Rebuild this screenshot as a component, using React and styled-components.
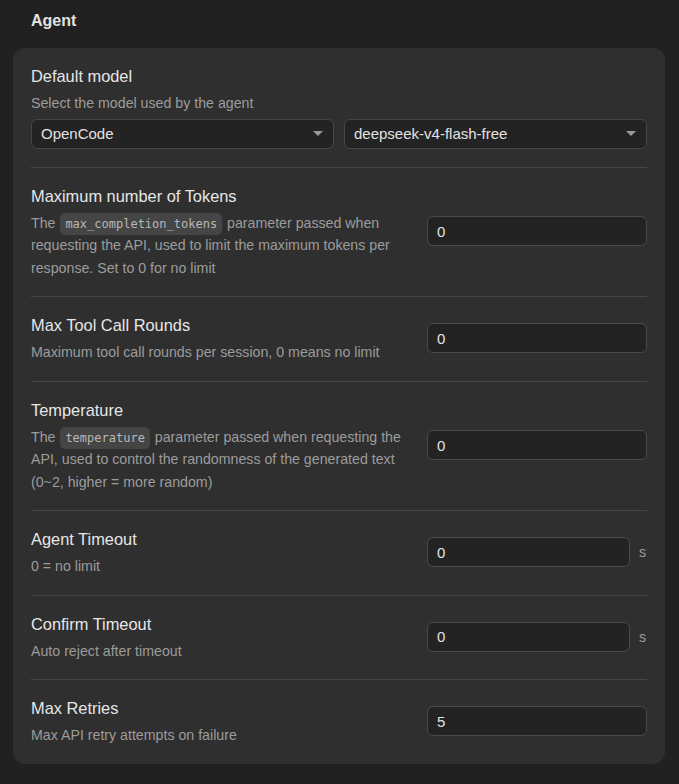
import React from "react";
import styled, { createGlobalStyle } from "styled-components";

const Global = createGlobalStyle`
  html, body { margin: 0; padding: 0; background: #212121; }
  body { font-family: "Liberation Sans", Arial, sans-serif; color: #e4e4e4; }
  * { box-sizing: border-box; }
`;

const Page = styled.div`
  padding: 9px 14px 20px 13px;
  min-height: 784px;
`;

const Heading = styled.h2`
  margin: 0 0 15px 18px;
  font-size: 16px;
  line-height: 24px;
  font-weight: 700;
  color: #e2e2e2;
`;

const Card = styled.section`
  background: #2f2f2f;
  border-radius: 12px;
  padding: 0 18px;
`;

const Row = styled.div`
  display: ${(p) => (p.$stacked ? "block" : "flex")};
  align-items: center;
  gap: 20px;
  padding: 16px 0 17px;
  border-bottom: 1px solid #474747;
  &:first-child { padding-bottom: 18px; }
  &:last-child { border-bottom: none; }
`;

const Label = styled.div`
  flex: 1;
  min-width: 0;
`;

const Title = styled.div`
  font-size: 16.4px;
  line-height: 24px;
  height: 24px;
  color: #e6e6e6;
`;

const Desc = styled.div`
  margin-top: 4px;
  font-size: 14.2px;
  line-height: 22.5px;
  color: #9c9c9c;
`;

const Code = styled.code`
  font-family: "DejaVu Sans Mono", "Liberation Mono", monospace;
  font-size: 12px;
  line-height: 1;
  padding: 4px 5px;
  margin: 0 1px;
  border-radius: 5px;
  background: #454545;
  color: #b8b8b8;
`;

const SelectRow = styled.div`
  display: flex;
  gap: 10px;
  margin-top: 4px;
`;

const Select = styled.div`
  flex: 1;
  height: 30px;
  display: flex;
  align-items: center;
  justify-content: space-between;
  padding: 0 10px 0 9px;
  background: #232323;
  border: 1px solid #474747;
  border-radius: 6px;
  font-size: 15px;
  color: #e2e2e2;
`;

const Arrow = styled.span`
  width: 0;
  height: 0;
  border-left: 5px solid transparent;
  border-right: 5px solid transparent;
  border-top: 5px solid #9a9a9a;
`;

const Control = styled.div`
  width: 220px;
  flex-shrink: 0;
  display: flex;
  align-items: center;
  gap: 9px;
`;

const Input = styled.input`
  flex: 1;
  min-width: 0;
  width: 100%;
  height: 30px;
  padding: 0 9px;
  background: #232323;
  border: 1px solid #4a4a4a;
  border-radius: 6px;
  font-family: "Liberation Sans", Arial, sans-serif;
  font-size: 15px;
  color: #e2e2e2;
  outline: none;
`;

const Unit = styled.span`
  font-size: 14.2px;
  color: #9c9c9c;
  width: 8px;
`;

const settings = [
  {
    title: "Maximum number of Tokens",
    desc: (
      <>
        The <Code>max_completion_tokens</Code> parameter passed when requesting the API, used to
        limit the maximum tokens per response. Set to 0 for no limit
      </>
    ),
    value: "0",
  },
  { title: "Max Tool Call Rounds", desc: "Maximum tool call rounds per session, 0 means no limit", value: "0" },
  {
    title: "Temperature",
    desc: (
      <>
        The <Code>temperature</Code> parameter passed when requesting the API, used to control the
        randomness of the generated text (0~2, higher = more random)
      </>
    ),
    value: "0",
  },
  { title: "Agent Timeout", desc: "0 = no limit", value: "0", unit: "s" },
  { title: "Confirm Timeout", desc: "Auto reject after timeout", value: "0", unit: "s" },
  { title: "Max Retries", desc: "Max API retry attempts on failure", value: "5" },
];

export default function App() {
  return (
    <>
      <Global />
      <Page>
        <Heading>Agent</Heading>
        <Card>
          <Row $stacked>
            <Title>Default model</Title>
            <Desc>Select the model used by the agent</Desc>
            <SelectRow>
              <Select>
                <span>OpenCode</span>
                <Arrow />
              </Select>
              <Select>
                <span>deepseek-v4-flash-free</span>
                <Arrow />
              </Select>
            </SelectRow>
          </Row>
          {settings.map((s) => (
            <Row key={s.title}>
              <Label>
                <Title>{s.title}</Title>
                <Desc>{s.desc}</Desc>
              </Label>
              <Control>
                <Input defaultValue={s.value} />
                {s.unit && <Unit>{s.unit}</Unit>}
              </Control>
            </Row>
          ))}
        </Card>
      </Page>
    </>
  );
}
